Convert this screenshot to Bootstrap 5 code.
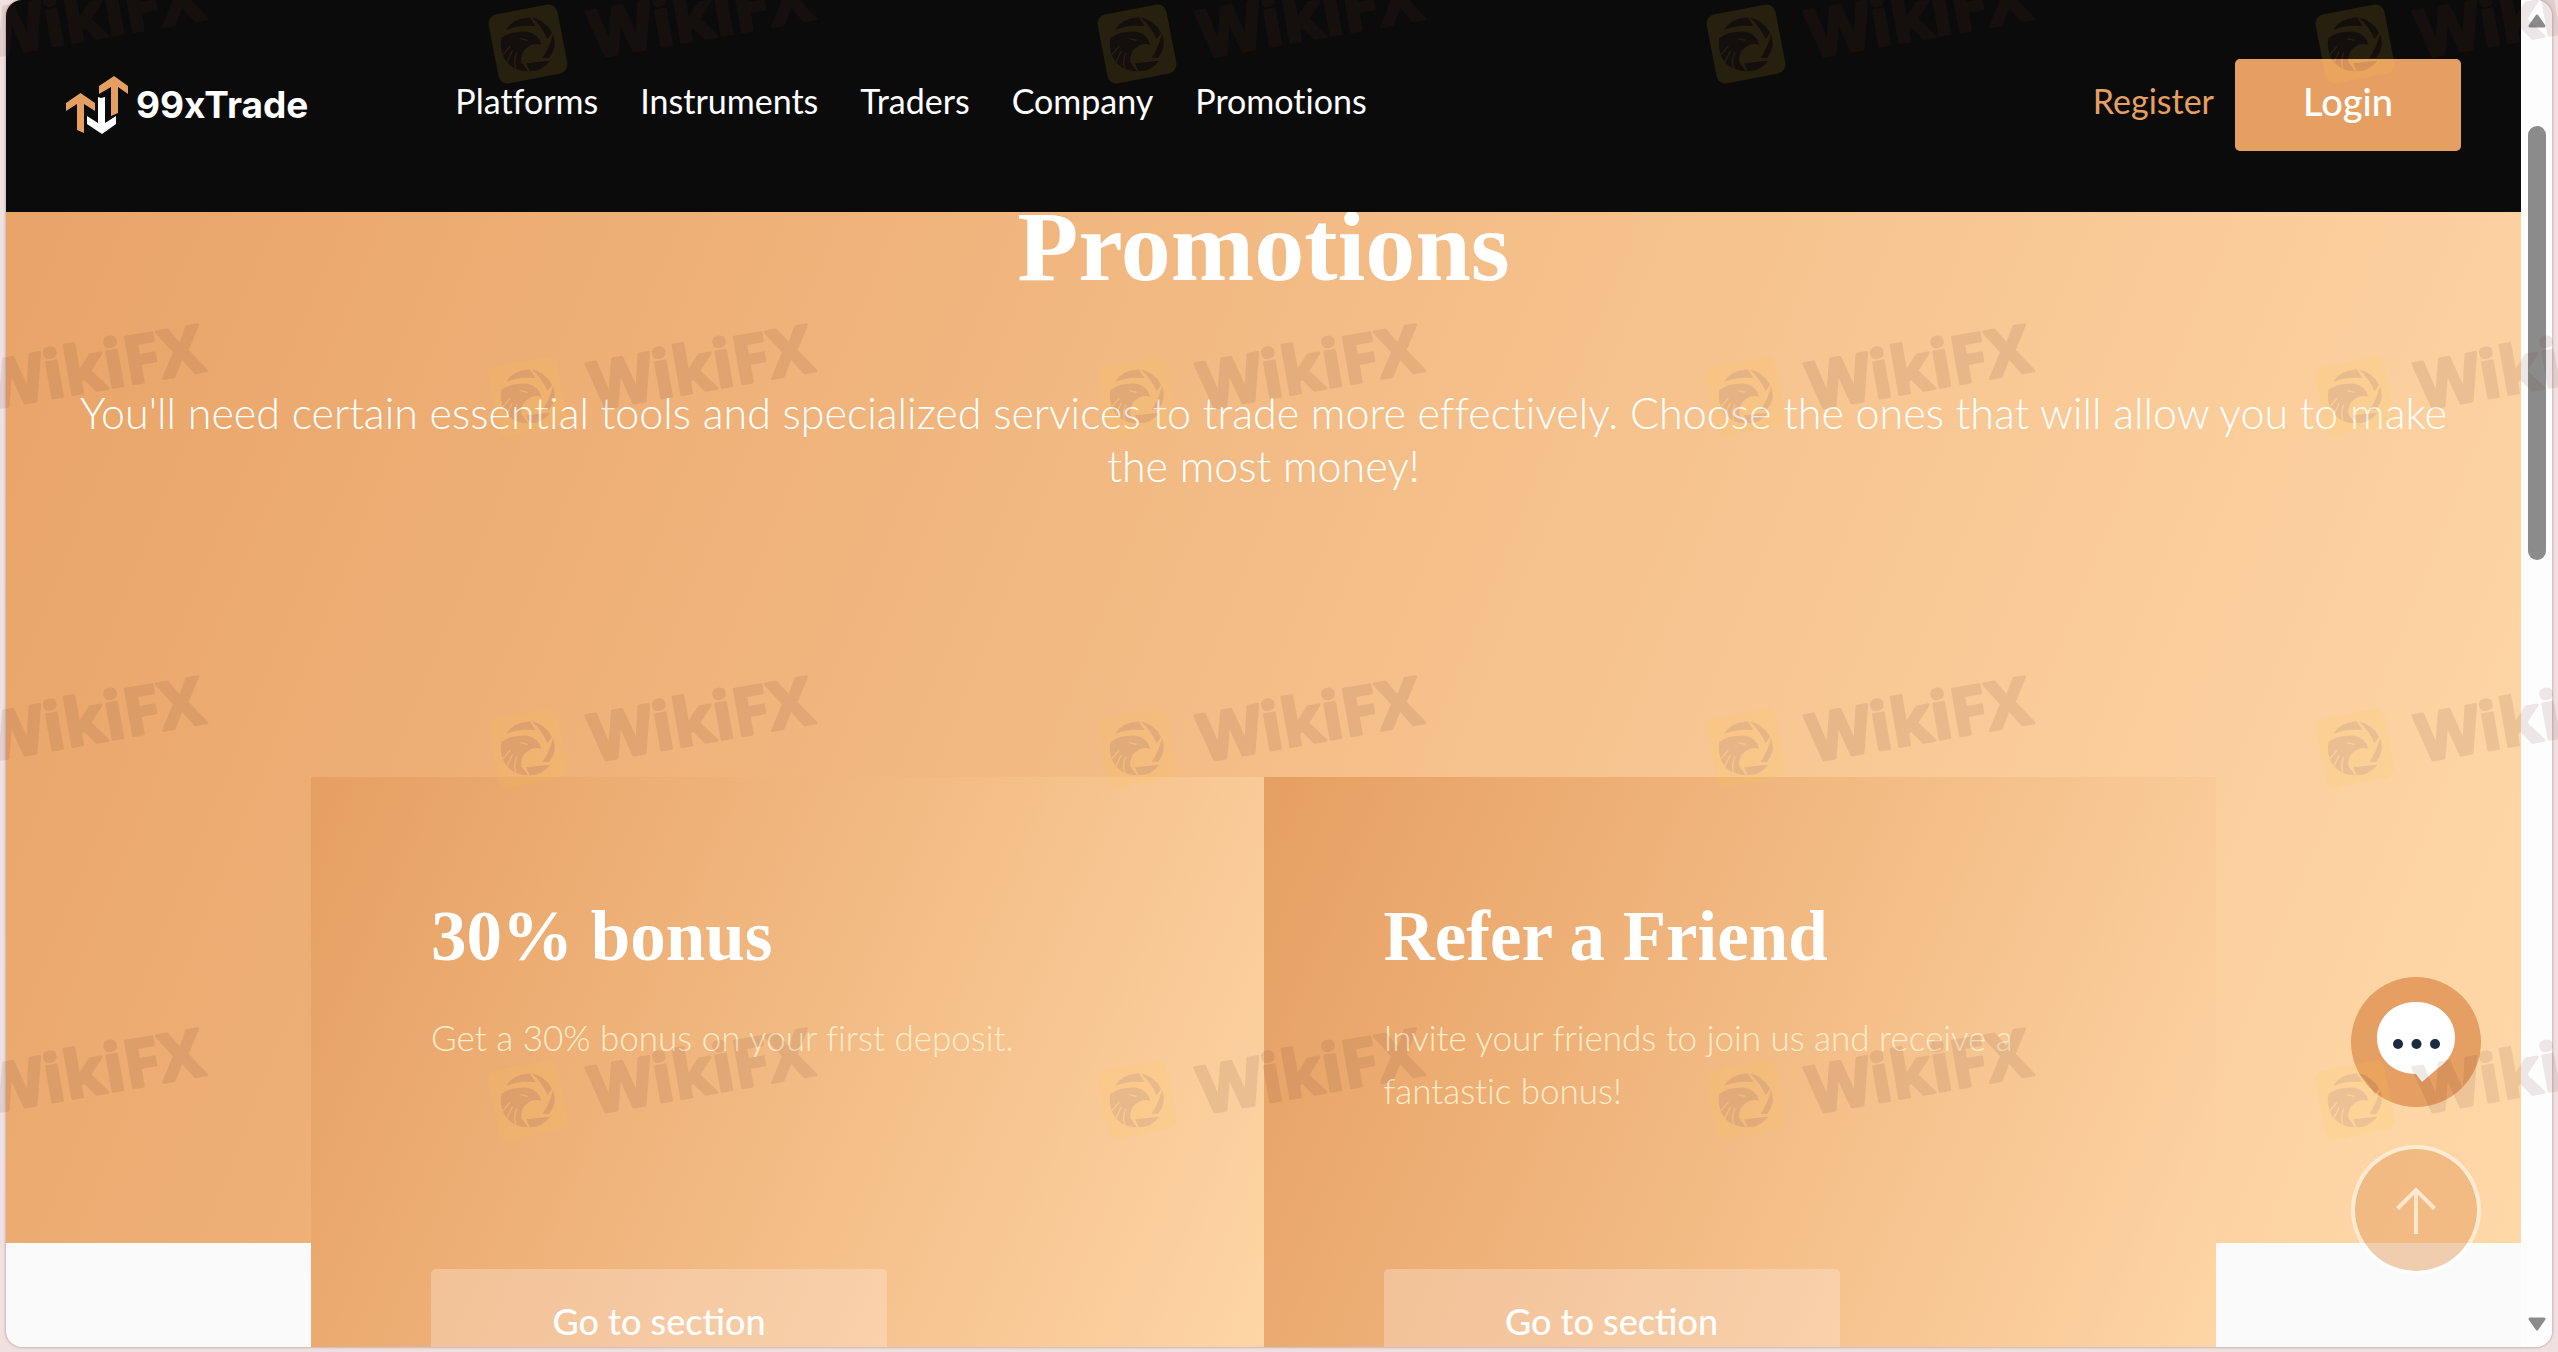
<!DOCTYPE html>
<html lang="en">
<head>
<meta charset="utf-8">
<meta name="viewport" content="width=device-width, initial-scale=1">
<title>99xTrade - Promotions</title>
<link href="https://cdn.jsdelivr.net/npm/bootstrap@5.3.0/dist/css/bootstrap.min.css" rel="stylesheet">
<style>
  :root { --accent: #e69f62; --sand: #ffd8a8; --ink: #0b0b0b; }
  body { background: #f0e1e0; font-family: Lato, sans-serif; font-variant-ligatures: none; overflow: hidden; height: 100vh; }
  .browser-pane { height: calc(100vh - 5px); margin: 0 6px; background: #fafafa; border-radius: 16px; box-shadow: 0 0 3px rgba(90, 50, 60, .5); }
  .site-header { z-index: 3; background: var(--ink); padding: 59px 60px 61px; }
  .brand { gap: 7px; color: #fff; font: 700 37px/44px Inter, sans-serif; text-decoration: none; }
  .main-nav { margin-left: 147px; gap: 42px; padding-bottom: 8px; }
  .main-nav a, .register-link { font-size: 34px; line-height: 42px; color: #fff; text-decoration: none; }
  .account { gap: 21px; }
  .account .register-link { color: var(--accent); padding-bottom: 8px; }
  .login-btn { width: 226px; height: 92px; padding: 0 0 8px; font-size: 38px; font-weight: 500; line-height: 44px; color: #fff; background: var(--accent); border: 0; border-radius: 5px; }
  .hero { height: 1243px; padding: 197px 60px 0; background: linear-gradient(112deg, #e8a266, var(--sand)); }
  .hero h1 { font: 700 100px/100px "Liberation Serif", serif; margin: 0 0 89px; }
  .hero p { font-size: 43px; font-weight: 300; line-height: 53px; margin: 0; }
  .promo-row { margin-top: -466px; padding: 0 305px; }
  .promo-card { padding: 119px 120px 120px; background: linear-gradient(113deg, var(--accent), var(--sand)); color: #fff; }
  .promo-card h2 { font: 700 71px/80px "Liberation Serif", serif; margin: 0 0 35px; }
  .promo-card p { min-height: 106px; font-size: 35px; font-weight: 300; line-height: 53px; margin: 0 0 152px; color: #ffecca; }
  .section-btn { width: 456px; max-width: 100%; height: 103px; font-size: 36px; font-weight: 500; line-height: 44px; color: #fff; background: rgba(255, 240, 235, .3); border: 0; border-radius: 5px; padding: 0; }
  .floating { z-index: 4; right: 40px; bottom: 72px; gap: 38px; }
  .round-btn { width: 130px; height: 130px; border: 0; padding: 0; border-radius: 50%; background: var(--accent); }
  .round-btn.to-top { background: rgba(230, 159, 98, .5); border: 4px solid rgba(255, 255, 255, .5); background-clip: padding-box; }
  .scroll-track { width: 31px; background: #fdfdfd; padding: 14px 0 16px; }
  .scroll-thumb { width: 18px; height: 434px; margin-top: 98px; border-radius: 9px; background: #8b8b8b; }
  .stamp-layer { z-index: 9; pointer-events: none; }
  .stamp-text { font: 700 66px "Open Sans", sans-serif; }
</style>
</head>
<body class="position-relative">
<div class="browser-pane d-flex overflow-hidden">
  <div class="flex-grow-1 position-relative overflow-hidden">
    <header class="site-header position-absolute top-0 start-0 w-100 d-flex align-items-center">
      <a class="brand d-flex align-items-center" href="#">
        <svg width="63" height="60" viewBox="0 0 63 60" aria-hidden="true">
          <path fill="#e69f62" d="M14.500 18 29 28v8l-11-7v29l-7-3V29L0 36v-8z"/>
          <path fill="#fff" d="M32 22l3 1 4-1v26l11-7v8L36 59 21 49v-8l11 7z"/>
          <path fill="#e69f62" d="M48 1l14 10v8l-10-7v26l-7 3V12l-12 7v-8z"/>
        </svg>
        99xTrade
      </a>
      <nav class="main-nav d-flex" aria-label="Main">
        <a href="#">Platforms</a><a href="#">Instruments</a><a href="#">Traders</a><a href="#">Company</a><a href="#">Promotions</a>
      </nav>
      <div class="account d-flex align-items-center ms-auto">
        <a class="register-link" href="#">Register</a>
        <button type="button" class="login-btn btn">Login</button>
      </div>
    </header>
    <main>
      <section class="hero text-white text-center">
        <h1>Promotions</h1>
        <p>You'll need certain essential tools and specialized services to trade more effectively. Choose the ones that will allow you to make the most money!</p>
      </section>
      <section class="promo-row">
        <div class="row g-0">
          <div class="col-6 promo-card">
            <h2>30% bonus</h2>
            <p>Get a 30% bonus on your first deposit.</p>
            <button type="button" class="section-btn btn">Go to section</button>
          </div>
          <div class="col-6 promo-card">
            <h2>Refer a Friend</h2>
            <p>Invite your friends to join us and receive a fantastic bonus!</p>
            <button type="button" class="section-btn btn">Go to section</button>
          </div>
        </div>
      </section>
    </main>
    <div class="floating position-absolute d-flex flex-column">
      <button type="button" class="round-btn" aria-label="Open chat">
        <svg width="130" height="130" viewBox="0 0 130 130" aria-hidden="true">
          <path fill="#fff" d="M65 25c22 0 39 15 39 36 0 12-6 23-18 31L71 105l-6-8c-22 0-39-15-39-36s17-36 39-36z"/>
          <g fill="#1b2b40"><circle cx="47" cy="67" r="5"/><circle cx="65.500" cy="67" r="5"/><circle cx="84" cy="67" r="5"/></g>
        </svg>
      </button>
      <button type="button" class="round-btn to-top d-flex align-items-center justify-content-center" aria-label="Back to top">
        <svg width="40" height="48" viewBox="0 0 40 48" fill="none" stroke="#ffe8cd" stroke-width="4" aria-hidden="true"><path d="M20 48V4M1.500 22.500 20 4l18.500 18.500"/></svg>
      </button>
    </div>
  </div>
  <div class="scroll-track flex-shrink-0 d-flex flex-column align-items-center" aria-hidden="true">
    <svg width="18" height="14" viewBox="0 0 18 14"><path d="M9 2 16 12H2z" fill="#8b8b8b" stroke="#8b8b8b" stroke-width="3" stroke-linejoin="round"/></svg>
    <div class="scroll-thumb"></div>
    <svg class="mt-auto" width="18" height="14" viewBox="0 0 18 14"><path d="M9 12 16 2H2z" fill="#8b8b8b" stroke="#8b8b8b" stroke-width="3" stroke-linejoin="round"/></svg>
  </div>
</div>

<svg class="stamp-layer position-absolute top-0 start-0 w-100 h-100" aria-hidden="true">
  <defs>
    <pattern id="stamp" patternUnits="userSpaceOnUse" x="468" y="-86" width="609" height="352">
      <rect x="25" y="95" width="70" height="70" rx="9" fill="#ffc832" transform="rotate(-11 60 130)"/>
      <g transform="translate(60 130) scale(.333) translate(-263 -320)">
        <g fill="#5a2420">
          <path d="M197 278Q218 243 268 240l18 26Q236 261 197 278z"/>
          <path d="M273 240q42 8 62 46l-13 20q-19-42-49-66z"/>
          <path d="M338 290q16 38-12 72l-19-1q21-30 31-71z"/>
          <path d="M257 378l73-8q-25 32-62 32z"/>
          <path d="M183 302q30-22 78-19 36 8 42 40-14-6-30 0-34 16-30 52l20 27q-50-2-72-40-14-30-8-60z"/>
        </g>
        <g fill="none" stroke="#ffc832" stroke-width="4"><path d="M188 352l22-26M200 374l16-34M226 394q-8-26 4-48M240 304l22 5"/></g>
      </g>
      <text class="stamp-text" x="126" y="144" transform="rotate(-10 126 144)" fill="#643028" stroke="#643028" stroke-width="3" stroke-linejoin="round">WikiFX</text>
    </pattern>
  </defs>
  <rect width="100%" height="100%" fill="url(#stamp)" opacity=".11"/>
</svg>
<script src="https://cdn.jsdelivr.net/npm/bootstrap@5.3.0/dist/js/bootstrap.bundle.min.js"></script>
</body>
</html>
